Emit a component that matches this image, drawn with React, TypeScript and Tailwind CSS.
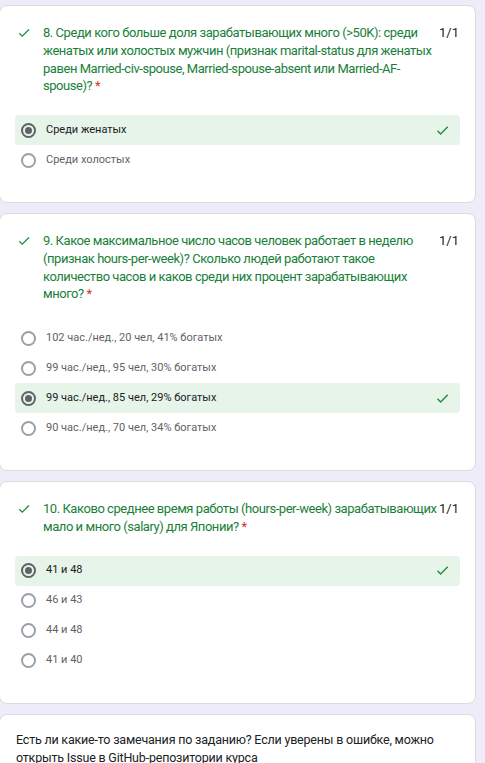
const Check = ({ className }: { className: string }) => (
  <svg viewBox="0 0 24 24" className={className} fill="none">
    <path d="M4 12.5l5 5L20.5 6" stroke="#1e8e3e" strokeWidth="2.2" />
  </svg>
);

type Option = { text: string; selected?: boolean };

const questions: { title: string; options: Option[] }[] = [
  {
    title:
      "8. Среди кого больше доля зарабатывающих много (>50K): среди женатых или холостых мужчин (признак marital-status для женатых равен Married-civ-spouse, Married-spouse-absent или Married-AF-spouse)?",
    options: [{ text: "Среди женатых", selected: true }, { text: "Среди холостых" }],
  },
  {
    title:
      "9. Какое максимальное число часов человек работает в неделю (признак hours-per-week)? Сколько людей работают такое количество часов и каков среди них процент зарабатывающих много?",
    options: [
      { text: "102 час./нед., 20 чел, 41% богатых" },
      { text: "99 час./нед., 95 чел, 30% богатых" },
      { text: "99 час./нед., 85 чел, 29% богатых", selected: true },
      { text: "90 час./нед., 70 чел, 34% богатых" },
    ],
  },
  {
    title:
      "10. Каково среднее время работы (hours-per-week) зарабатывающих мало и много (salary) для Японии?",
    options: [
      { text: "41 и 48", selected: true },
      { text: "46 и 43" },
      { text: "44 и 48" },
      { text: "41 и 40" },
    ],
  },
];

const Radio = ({ selected }: { selected?: boolean }) =>
  selected ? (
    <span className="w-[15px] h-[15px] rounded-full border-2 border-[#5f6368] flex items-center justify-center">
      <span className="w-[7px] h-[7px] rounded-full bg-[#5f6368]" />
    </span>
  ) : (
    <span className="w-[15px] h-[15px] rounded-full border-2 border-[#9aa0a6]" />
  );

const QuestionCard = ({ title, options }: { title: string; options: Option[] }) => (
  <div className="ml-[-1px] w-[477px] bg-white border border-[#dadce0] rounded-lg pt-[18px] pb-[27px]">
    <div className="flex items-start pl-[17px] pr-[19px]">
      <Check className="w-[14px] h-[14px] mt-[2px] shrink-0" />
      <p className="ml-[12px] mr-[-3px] w-[399px] shrink-0 text-[13px] tracking-[-0.45px] leading-[17.75px] text-[#188038] font-['Roboto',sans-serif]">
        {title} <span className="text-[#d93025]">*</span>
      </p>
      <span className="ml-auto text-[13px] leading-[17.75px] text-[#202124] font-['Roboto',sans-serif]">
        1/1
      </span>
    </div>
    <div className="mt-[20px] mx-[15px]">
      {options.map((o) => (
        <div
          key={o.text}
          className={`h-[30px] flex items-center pl-[6px] pr-[10px] rounded ${o.selected ? "bg-[#e6f4ea]" : ""}`}
        >
          <Radio selected={o.selected} />
          <span
            className={`ml-[10px] text-[11px] font-['Roboto',sans-serif] ${o.selected ? "text-[#202124]" : "text-[#5f6368]"}`}
          >
            {o.text}
          </span>
          {o.selected && <Check className="w-[15px] h-[15px] ml-auto" />}
        </div>
      ))}
    </div>
  </div>
);

export default function App() {
  return (
    <div className="min-h-screen w-[485px] bg-[#f0ebf8] pt-[5px] overflow-hidden flex flex-col gap-[10px]">
      {questions.map((q) => (
        <QuestionCard key={q.title} title={q.title} options={q.options} />
      ))}
      <div className="ml-[-1px] w-[477px] bg-white border border-[#dadce0] rounded-lg pt-[16px] px-[16px] pb-[20px]">
        <p className="text-[12.5px] tracking-[-0.2px] leading-[18px] text-[#202124] font-['Roboto',sans-serif]">
          Есть ли какие-то замечания по заданию? Если уверены в ошибке, можно открыть Issue в
          GitHub-репозитории курса
        </p>
      </div>
    </div>
  );
}
